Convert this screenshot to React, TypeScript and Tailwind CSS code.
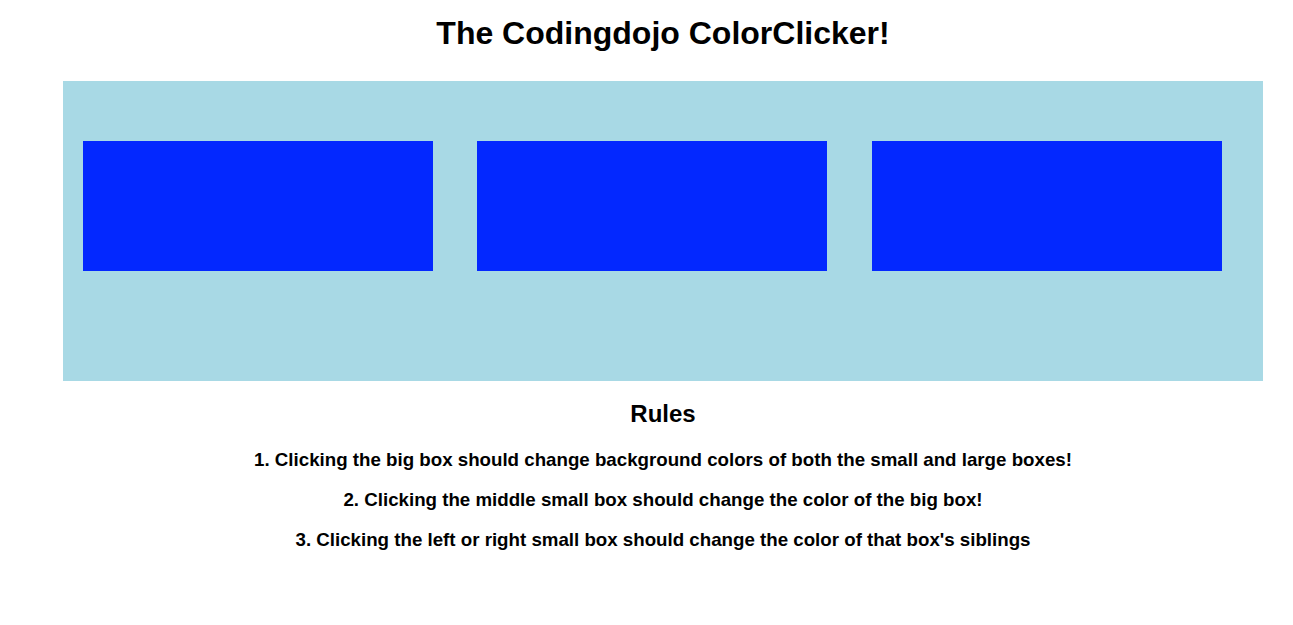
export default function App() {
  return (
    <div className="min-h-screen bg-white text-black" style={{ fontFamily: '"Liberation Sans", Arial, sans-serif' }}>
      <div className="ml-[63px] w-[1200px] text-center">
        <h1 className="pt-[15px] text-[32px] font-bold leading-[37px]">The Codingdojo ColorClicker!</h1>
        <div className="mt-[29px] flex h-[300px] bg-[#a8d9e5] pl-5 pt-[60px]">
          <div className="h-[130px] w-[350px] bg-[#0328ff]" />
          <div className="ml-[44px] h-[130px] w-[350px] bg-[#0328ff]" />
          <div className="ml-[45px] h-[130px] w-[350px] bg-[#0328ff]" />
        </div>
        <h2 className="mt-[19px] text-[24px] font-bold leading-[28px]">Rules</h2>
        <div className="mt-[22px] flex flex-col gap-5 text-[18.72px] font-bold leading-[20px]">
          <p>1. Clicking the big box should change background colors of both the small and large boxes!</p>
          <p>2. Clicking the middle small box should change the color of the big box!</p>
          <p>3. Clicking the left or right small box should change the color of that box's siblings</p>
        </div>
      </div>
    </div>
  );
}
